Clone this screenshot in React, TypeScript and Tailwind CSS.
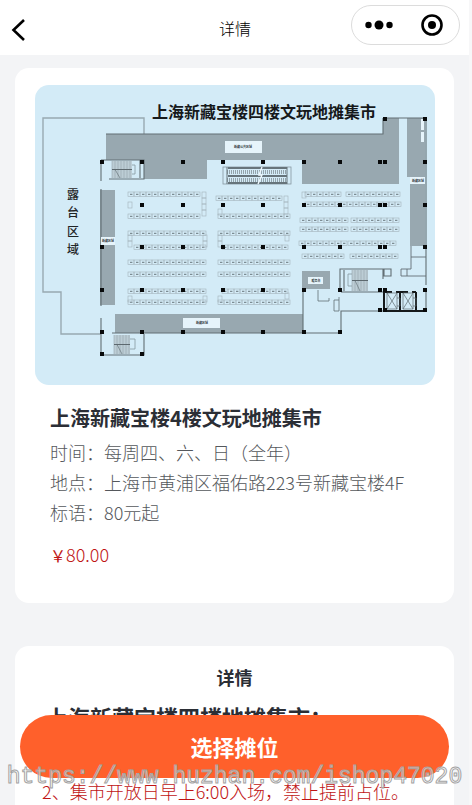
const pillars: [number, number[]][] = [
  [34, [350, 390]],
  [77, [67, 107, 148, 188, 228, 269, 305, 345, 350, 390]],
  [120, [107, 148, 188, 228, 269, 305, 345, 350, 390]],
  [162, [67, 107, 148, 188, 228, 269, 305, 345, 350, 390]],
  [205, [67, 107, 148, 188, 228, 269, 305, 345, 350, 390]],
  [225, [345, 350, 390]],
  [247, [67, 107, 148, 188, 228, 269, 305]],
  [269, [67, 107]],
];

// x, y, number of stalls
const stallRows: [number, number, number][] = [
  [93, 107, 12], [93, 129, 12], [93, 146, 13], [99, 160, 12], [93, 175, 13], [93, 187, 13], [93, 204, 13], [93, 215, 13],
  [181, 111, 11], [183, 129, 12], [183, 146, 12], [187, 160, 11], [183, 175, 12], [183, 187, 12], [187, 204, 11], [183, 215, 12],
  [270, 107, 6], [311, 107, 9], [270, 117, 16],
  [265, 133, 8], [316, 133, 8], [265, 142, 8], [316, 142, 8],
  [264, 156, 8], [313, 156, 8], [267, 169, 7], [315, 169, 8],
];

const sideStalls: [number, number, number][] = [
  [167, 107, 4], [93, 117, 1], [249, 111, 3], [183, 124, 1], [267, 107, 1],
  [93, 150, 2], [168, 150, 2], [183, 150, 2], [250, 150, 1],
  [93, 211, 1], [168, 211, 1], [183, 211, 1], [250, 208, 1],
];

const elevators = [350, 366];

const info = [
  { label: '时间', value: '每周四、六、日（全年）' },
  { label: '地点', value: '上海市黄浦区福佑路223号新藏宝楼4F' },
  { label: '标语', value: '80元起' },
];

function Stairs({ x, y, width, height }: { x: number; y: number; width: number; height: number }) {
  const steps = Array.from({ length: Math.floor(width / 3) + 1 }, (_, i) => x + i * 3);
  const mid = y + height / 2;
  return (
    <g fill="none" stroke="#93a3ab" strokeWidth="0.6">
      <rect x={x} y={y} width={width} height={height} fill="#bccdd5" stroke="none" />
      {steps.map((step) => (
        <path key={step} d={`M${step} ${y}v${height}`} />
      ))}
      <path d={`M${x} ${mid}h${width}`} stroke="#5d696f" strokeWidth="1.2" />
      <path d={`M${x + 3} ${mid}l5 ${height / 2}`} stroke="#5d696f" />
    </g>
  );
}

function FloorPlan() {
  return (
    <svg viewBox="0 0 400 300" className="block w-full rounded-[14px] bg-[#d3ebf7]" role="img" aria-label="四楼平面图">
      <path d="M66 249H26V207H8V33H109V49" fill="none" stroke="#98a9b1" strokeWidth="1.4" />

      {/* closed areas */}
      <g fill="#98a8b0">
        <path d="M71 49H348V33H364V99H267V75H172V94H109V75H71Z" />
        <path d="M372 33H390V161H375V92H372Z" />
        <path d="M65 105H80V220H65Z" />
        <path d="M80 229H268V248H80Z" />
        <path d="M267 186H295V204H267Z" />
      </g>

      {/* walls */}
      <g fill="none" stroke="#626e74" strokeWidth="1.1">
        <path d="M71 49H348V33M350 33H391M391 33V200M391 205V226" />
        <path d="M66 75H109V94H74M66 75V96M66 104V221M105 75V93" />
        <path d="M66 233V270H109V249M77 248H268" />
        <path d="M268 204V248H306V226H350" />
        <path d="M305 205V184H356V191H349V184M348 184V194M309 185V206M306 207H349" />
        <path d="M366 184H372V191H366ZM372 191H391M376 161V184H372M376 172H391" strokeWidth="0.9" />
        <path d="M283 205V216H294V213M299 226H304V215H299ZM304 215V212" strokeWidth="0.8" />
      </g>
      <path
        d="M349 205V226H391M365 207V226M381 207V226M350 207H357M361 207H373M377 207H381"
        fill="none"
        stroke="#15191b"
        strokeWidth="2"
      />
      {elevators.map((x) => (
        <g key={x} fill="none" stroke="#5f6b71" strokeWidth="0.7">
          <path d={`M${x + 2} 208h10v16h-10zM${x + 2} 208l10 16M${x + 12} 208l-10 16`} />
          <path d={`M${x + 12} 213h3v8h-3`} />
        </g>
      ))}

      {/* stairs and escalator */}
      <Stairs x={77} y={76} width={20} height={17} />
      <Stairs x={79} y={250} width={16} height={19} />
      <Stairs x={317} y={185} width={16} height={21} />
      <g fill="none" stroke="#8797a0" strokeWidth="0.8">
        <path d="M97 80h3v9h-3M95 254h5v10h-5M317 189h-4v12h4" />
        <rect x="188" y="82" width="68" height="17" />
      </g>
      <path d="M193 83H252M193 91H252M193 98H252" stroke="#66747b" strokeWidth="2" />
      <path d="M192 87H252M192 95H252" stroke="#93a3ab" strokeWidth="4" strokeDasharray="1 1" />
      <path d="M252 82V99M192 82V99" stroke="#66747b" />
      <path d="M227 82l-3 8h3l-4 9" fill="none" stroke="#eef8fd" strokeWidth="1.4" />

      {/* stalls */}
      {stallRows.map(([x, y, count]) => (
        <g key={`${x}-${y}`} fill="none" stroke="#a3b3bb" strokeWidth="0.6">
          {Array.from({ length: count }, (_, i) => (
            <g key={i}>
              <rect x={x + i * 6} y={y} width="6" height="4.5" />
              <path d={`M${x + i * 6 + 2} ${y + 2.3}h2.4`} stroke="#7d8c93" strokeWidth="1.2" />
            </g>
          ))}
        </g>
      ))}
      {sideStalls.map(([x, y, count]) => (
        <g key={`${x}-${y}`} fill="none" stroke="#a3b3bb" strokeWidth="0.6">
          {Array.from({ length: count }, (_, i) => (
            <rect key={i} x={x} y={y + i * 6} width="4" height="6" />
          ))}
        </g>
      ))}

      {/* small signs */}
      <g fill="#e6f4fb">
        <rect x="190" y="56" width="37" height="12" />
        <rect x="148" y="233" width="37" height="10" />
        <rect x="66" y="152" width="14" height="8" />
        <rect x="375" y="92" width="15" height="7" />
        <rect x="273" y="192" width="15" height="7" />
        <rect x="386" y="34" width="3" height="11" />
        <rect x="386" y="47" width="3" height="10" />
      </g>
      <g fill="#2b3235" fontSize="3" fontWeight="700" textAnchor="middle">
        <text x="208" y="63">新藏公共区域</text>
        <text x="167" y="239">新藏区域</text>
        <text x="73" y="157">新藏区域</text>
        <text x="383" y="97">新藏区域</text>
        <text x="281" y="197">服务台</text>
      </g>

      {pillars.map(([y, xs]) =>
        xs.map((x) => <rect key={`${x}-${y}`} x={x - 2} y={y - 2} width="4" height="4" fill="#080a0b" />)
      )}

      <text x="229" y="33" textAnchor="middle" fontSize="16" fontWeight="700" fill="#16191b">
        上海新藏宝楼四楼文玩地摊集市
      </text>
      <g fontSize="12" fontWeight="500" fill="#1f2426" textAnchor="middle">
        <text x="38" y="114">露</text>
        <text x="38" y="132">台</text>
        <text x="38" y="151">区</text>
        <text x="38" y="169">域</text>
      </g>
    </svg>
  );
}

function Header() {
  return (
    <header className="grid h-[55px] shrink-0 grid-cols-3 items-center bg-white pl-2.5 pr-[9px]">
      <button type="button" aria-label="返回" className="w-6 pt-1">
        <svg viewBox="0 0 16 24" className="h-6 w-4" fill="none" stroke="#000" strokeWidth="2.6">
          <path d="M14 2L3.500 12L14 22" />
        </svg>
      </button>
      <h1 className="text-center text-base font-light text-black">详情</h1>
      <div className="mb-[5px] flex h-10 w-[109px] items-center justify-between justify-self-end rounded-full border border-[#dcdcdc] pl-3 pr-4">
        <button type="button" aria-label="更多">
          <svg viewBox="0 0 30 12" className="h-3 w-[30px]">
            <circle cx="4.500" cy="6" r="3.200" />
            <circle cx="15" cy="6" r="4.500" />
            <circle cx="25.500" cy="6" r="3.200" />
          </svg>
        </button>
        <button type="button" aria-label="关闭">
          <svg viewBox="0 0 22 22" className="size-[22px]">
            <circle cx="11" cy="11" r="9.500" fill="none" stroke="#000" strokeWidth="2.600" />
            <circle cx="11" cy="11" r="4" />
          </svg>
        </button>
      </div>
    </header>
  );
}

export default function App() {
  return (
    <div className="relative flex h-screen flex-col overflow-hidden border-r-3 border-[#f7f7f8] bg-[#f3f4f6] font-['Noto_Sans_CJK_SC',sans-serif]">
      <Header />

      <main className="px-[15px] pt-[13px]">
        <section className="rounded-[14px] bg-white pr-[19px] pb-[34px] pl-5 pt-[17px]">
          <FloorPlan />
          <div className="px-[15px] pt-[18px]">
            <h2 className="text-xl leading-[30px] font-bold text-[#2b2e35]">上海新藏宝楼4楼文玩地摊集市</h2>
            <div className="pt-1 text-lg leading-[30px] font-light whitespace-nowrap text-[#55585c]">
              {info.map((item) => (
                <p key={item.label}>
                  {item.label}：{item.value}
                </p>
              ))}
            </div>
            <p className="mt-3 text-lg leading-[30px] font-light text-[#c01414]">
              <span className="text-base font-normal">￥</span>80.00
            </p>
          </div>
        </section>

        <section className="mt-[43px] rounded-[14px] bg-white px-[27px] pt-4 pb-28">
          <h2 className="text-center text-lg leading-[30px] font-bold text-[#2b2e35]">详情</h2>
          <h3 className="mt-2 pl-1 text-[22px] leading-8 font-bold text-[#2b2e35]">上海新藏宝楼四楼地摊集市：</h3>
          <p className="mt-11 text-lg leading-[30px] font-light whitespace-nowrap text-[#c01414]">
            2、集市开放日早上6:00入场，禁止提前占位。
          </p>
        </section>
      </main>

      <button
        type="button"
        className="absolute inset-x-5 bottom-[27px] h-[63px] rounded-full bg-[#ff602b] text-[22px] font-bold text-white"
      >
        选择摊位
      </button>

      <p className="pointer-events-none absolute inset-x-0 bottom-3 text-center font-['Liberation_Mono',monospace] text-[23px] leading-8 whitespace-nowrap text-white/50 [-webkit-text-stroke:1px_#a3a3a3]">
        https://www.huzhan.com/ishop47020
      </p>
    </div>
  );
}
